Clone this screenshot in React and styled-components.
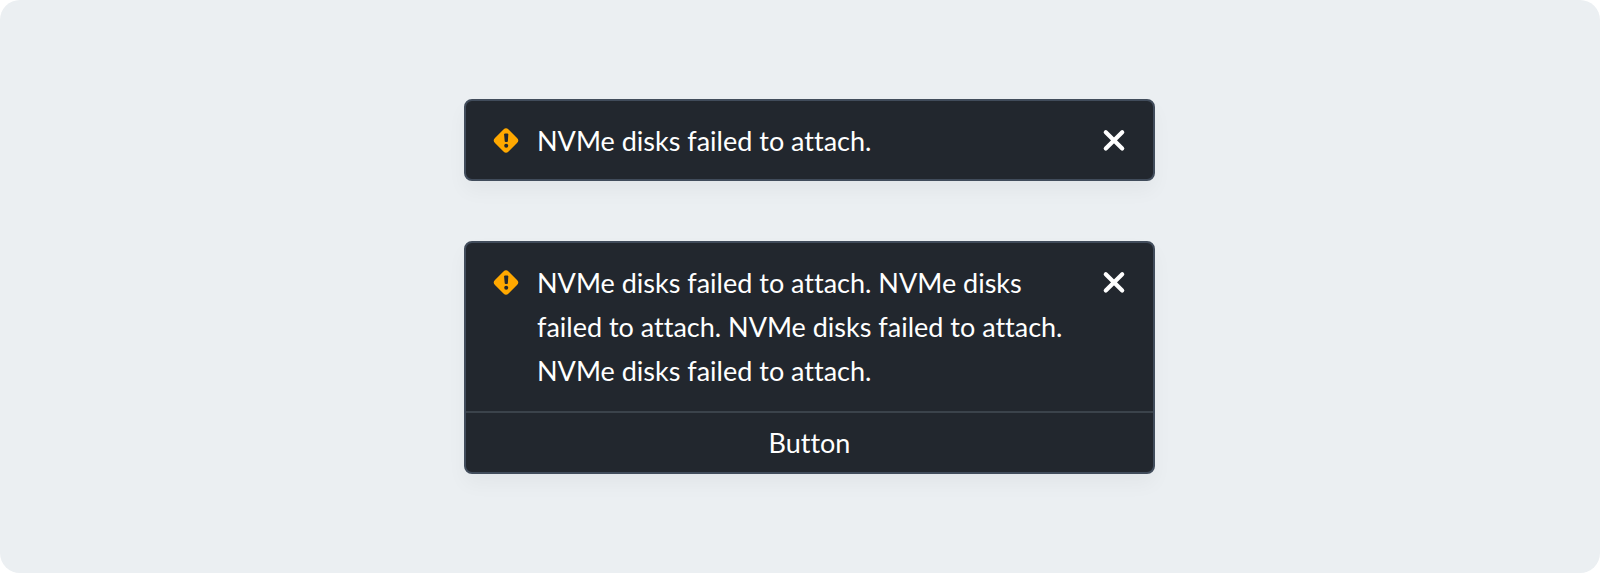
import React from "react"
import styled, { createGlobalStyle } from "styled-components"

const GlobalStyle = createGlobalStyle`
  *, *::before, *::after {
    box-sizing: border-box;
  }
  body {
    margin: 0;
    background: #ffffff;
    font-family: Lato, "Liberation Sans", sans-serif;
    font-variant-ligatures: none;
  }
`

const Canvas = styled.main`
  display: flex;
  flex-direction: column;
  align-items: center;
  gap: 60px;
  min-height: 100vh;
  padding: 99px 0 99px 19px;
  border-radius: 20px;
  background: #ebeff2;
`

const Toast = styled.section`
  width: 100%;
  max-width: 691px;
  overflow: hidden;
  border: 2px solid #414c5b;
  border-radius: 8px;
  background: #22272e;
  color: #ffffff;
  box-shadow: 0 10px 20px rgba(0, 0, 0, 0.04);
`

const ToastBody = styled.div`
  display: flex;
  align-items: flex-start;
  gap: 18px;
  padding: ${({ $withAction }) =>
    $withAction ? "18px 26px 18px 27px" : "18px 26px 16px 27px"};
`

const IconSlot = styled.span`
  display: flex;
  flex: none;
  align-items: center;
  height: 42px;
`

const Message = styled.p`
  flex: 1;
  margin: 0;
  font-size: 27px;
  line-height: 44px;
`

const CloseButton = styled.button`
  display: flex;
  flex: none;
  align-items: center;
  height: 42px;
  padding: 0;
  border: 0;
  background: none;
  color: inherit;
  cursor: pointer;
`

const ActionButton = styled.button`
  display: block;
  width: 100%;
  height: 61px;
  padding: 0;
  border: 0;
  border-top: 2px solid #3b434b;
  background: none;
  color: inherit;
  font-family: inherit;
  font-size: 27px;
  font-variant-ligatures: inherit;
  line-height: 44px;
  cursor: pointer;
`

const WarningIcon = () => (
  <svg width="26" height="26" viewBox="0 0 26 26" aria-hidden="true">
    <rect
      x="3.4"
      y="3.9"
      width="19.2"
      height="19.2"
      rx="3.6"
      fill="#ffa800"
      transform="rotate(45 13 13.5)"
    />
    <path d="M11.1 7.6q0-1 1-1h2.2q1 0 1 1l-.4 6.4q-.1.9-.9.9h-1.4q-.8 0-.9-.9z" fill="#22272e" />
    <circle cx="13.2" cy="18.7" r="2" fill="#22272e" />
  </svg>
)

const CloseIcon = () => (
  <svg width="26" height="26" viewBox="0 0 26 26" aria-hidden="true">
    <path
      d="M4.8 5.2l16.4 16.4M21.2 5.2L4.8 21.6"
      fill="none"
      stroke="currentColor"
      strokeWidth="4.2"
      strokeLinecap="round"
    />
  </svg>
)

const Notification = ({ children, action }) => (
  <Toast>
    <ToastBody $withAction={Boolean(action)}>
      <IconSlot>
        <WarningIcon />
      </IconSlot>
      <Message>{children}</Message>
      <CloseButton type="button" aria-label="Close">
        <CloseIcon />
      </CloseButton>
    </ToastBody>
    {action && <ActionButton type="button">{action}</ActionButton>}
  </Toast>
)

export default () => (
  <>
    <GlobalStyle />
    <Canvas>
      <Notification>NVMe disks failed to attach.</Notification>
      <Notification action="Button">
        NVMe disks failed to attach. NVMe disks failed to attach. NVMe disks
        failed to attach. NVMe disks failed to attach.
      </Notification>
    </Canvas>
  </>
)
